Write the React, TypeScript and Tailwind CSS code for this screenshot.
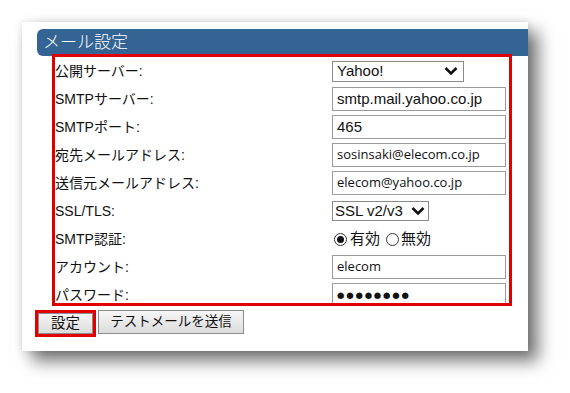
import React from "react";

const jp = { fontFamily: '"Liberation Sans", "Noto Sans CJK JP", sans-serif' };
const seg = { fontFamily: '"Open Sans", "Noto Sans CJK JP", sans-serif' };

function Chevron() {
  return (
    <svg width="14" height="10" viewBox="0 0 14 10" className="shrink-0">
      <polyline points="1.5,2 7,7.5 12.5,2" fill="none" stroke="#111" strokeWidth="2.6" />
    </svg>
  );
}

function Field({ children, font = jp, className = "" }: { children: React.ReactNode; font?: React.CSSProperties; className?: string }) {
  return (
    <div
      className={`flex h-[24px] w-[174px] items-center border border-[#9a9a9a] bg-white pl-[4px] text-[#111] ${className}`}
      style={font}
    >
      {children}
    </div>
  );
}

function Radio({ checked }: { checked?: boolean }) {
  return (
    <span className="flex h-[13px] w-[13px] items-center justify-center rounded-full border border-[#333] bg-white">
      {checked && <span className="h-[7px] w-[7px] rounded-full bg-[#111]" />}
    </span>
  );
}

const rows: { label: string; control: React.ReactNode }[] = [
  {
    label: "公開サーバー:",
    control: (
      <div className="flex h-[21px] w-[132px] items-center justify-between border border-[#8a8a8a] bg-white pl-[4px] pr-[5px] text-[15px] text-[#111]" style={jp}>
        Yahoo!
        <Chevron />
      </div>
    ),
  },
  { label: "SMTPサーバー:", control: <Field className="text-[15px]">smtp.mail.yahoo.co.jp</Field> },
  { label: "SMTPポート:", control: <Field className="text-[15px]">465</Field> },
  { label: "宛先メールアドレス:", control: <Field font={seg} className="text-[13px]">sosinsaki@elecom.co.jp</Field> },
  { label: "送信元メールアドレス:", control: <Field font={seg} className="text-[13px]">elecom@yahoo.co.jp</Field> },
  {
    label: "SSL/TLS:",
    control: (
      <div className="flex h-[20px] w-[97px] items-center justify-between border border-[#8a8a8a] bg-white pl-[2px] pr-[3px] text-[15px] text-[#111]" style={jp}>
        SSL v2/v3
        <Chevron />
      </div>
    ),
  },
  {
    label: "SMTP認証:",
    control: (
      <div className="flex items-center pl-[2px] text-[15px] text-[#111]" style={jp}>
        <Radio checked />
        <span className="ml-[3px]">有効</span>
        <span className="ml-[6px]"><Radio /></span>
        <span className="ml-[2px]">無効</span>
      </div>
    ),
  },
  { label: "アカウント:", control: <Field font={seg} className="text-[13px]">elecom</Field> },
  {
    label: "パスワード:",
    control: (
      <Field font={{ fontFamily: '"DejaVu Sans", sans-serif' }} className="text-[8.5px] tracking-[1.8px]">
        ●●●●●●●●
      </Field>
    ),
  },
];

export default function App() {
  return (
    <main className="min-h-[393px] w-[570px] bg-white pl-[22px] pt-[22px]">
      <div className="w-[506px] bg-white pb-[14px] pl-[15px] pt-[7px] shadow-[10px_10px_16px_rgba(0,0,0,0.55),0_0_8px_rgba(0,0,0,0.12)]">
        {/* Title bar */}
        <div className="flex h-[27px] items-center rounded-l-[6px] bg-[#346494] pl-[6px] text-[17px] font-light text-white" style={jp}>
          メール設定
        </div>

        {/* Form */}
        <div className="-mt-[2px] ml-[15px] h-[252px] w-[460px] overflow-hidden border-[3px] border-[#e00000] bg-white">
          {rows.map((r) => (
            <div key={r.label} className="flex h-[28px] items-center">
              <div className="w-[277px] text-[14px] text-[#111]" style={jp}>
                {r.label}
              </div>
              {r.control}
            </div>
          ))}
        </div>

        {/* Buttons */}
        <div className="mt-[4px] flex items-start gap-[2px]">
          <div className="-ml-[2px] border-[3px] border-[#e00000]">
            <button className="flex h-[21px] w-[55px] items-center justify-center border border-[#8c8c8c] bg-gradient-to-b from-[#f6f6f6] to-[#dcdcdc] text-[14.5px] text-[#111]" style={jp}>
              設定
            </button>
          </div>
          <button className="flex h-[24px] w-[146px] items-center justify-center border border-[#8c8c8c] bg-gradient-to-b from-[#f6f6f6] to-[#dcdcdc] text-[13.5px] text-[#111]" style={jp}>
            テストメールを送信
          </button>
        </div>
      </div>
    </main>
  );
}
